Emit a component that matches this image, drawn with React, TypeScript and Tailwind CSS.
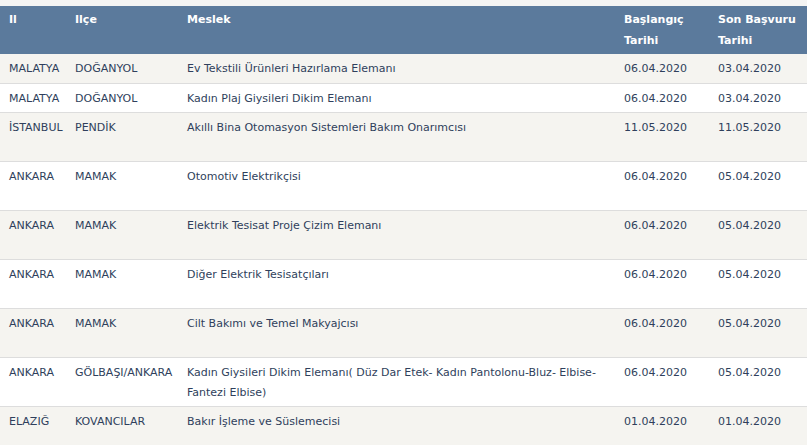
import React from "react";

type Row = { il: string; ilce: string; meslek: string; bas: string; son: string; tall?: boolean };

const rows: Row[] = [
  { il: "MALATYA", ilce: "DOĞANYOL", meslek: "Ev Tekstili Ürünleri Hazırlama Elemanı", bas: "06.04.2020", son: "03.04.2020" },
  { il: "MALATYA", ilce: "DOĞANYOL", meslek: "Kadın Plaj Giysileri Dikim Elemanı", bas: "06.04.2020", son: "03.04.2020" },
  { il: "İSTANBUL", ilce: "PENDİK", meslek: "Akıllı Bina Otomasyon Sistemleri Bakım Onarımcısı", bas: "11.05.2020", son: "11.05.2020", tall: true },
  { il: "ANKARA", ilce: "MAMAK", meslek: "Otomotiv Elektrikçisi", bas: "06.04.2020", son: "05.04.2020", tall: true },
  { il: "ANKARA", ilce: "MAMAK", meslek: "Elektrik Tesisat Proje Çizim Elemanı", bas: "06.04.2020", son: "05.04.2020", tall: true },
  { il: "ANKARA", ilce: "MAMAK", meslek: "Diğer Elektrik Tesisatçıları", bas: "06.04.2020", son: "05.04.2020", tall: true },
  { il: "ANKARA", ilce: "MAMAK", meslek: "Cilt Bakımı ve Temel Makyajcısı", bas: "06.04.2020", son: "05.04.2020", tall: true },
  { il: "ANKARA", ilce: "GÖLBAŞI/ANKARA", meslek: "Kadın Giysileri Dikim Elemanı( Düz Dar Etek- Kadın Pantolonu-Bluz- Elbise- Fantezi Elbise)", bas: "06.04.2020", son: "05.04.2020", tall: true },
  { il: "ELAZIĞ", ilce: "KOVANCILAR", meslek: "Bakır İşleme ve Süslemecisi", bas: "01.04.2020", son: "01.04.2020", tall: true },
];

export default function App() {
  return (
    <div
      className="w-[807px] h-[445px] overflow-hidden bg-[#f4f4f3] pt-[6px]"
      style={{ fontFamily: '"DejaVu Sans", Verdana, sans-serif' }}
    >
      <table className="w-[807px] table-fixed border-collapse text-[11px] text-[#2f3f5c]">
        <colgroup>
          <col className="w-[66px]" />
          <col className="w-[112px]" />
          <col className="w-[437px]" />
          <col className="w-[94px]" />
          <col className="w-[98px]" />
        </colgroup>
        <thead>
          <tr className="bg-[#5b7a9c] text-white h-[48px]">
            <th className="text-left align-top font-bold leading-[21px] pl-[9px] pt-[3px]">Il</th>
            <th className="text-left align-top font-bold leading-[21px] pl-[9px] pt-[3px]">Ilçe</th>
            <th className="text-left align-top font-bold leading-[21px] pl-[9px] pt-[3px]">Meslek</th>
            <th className="text-left align-top font-bold leading-[21px] pl-[9px] pt-[3px]">Başlangıç Tarihi</th>
            <th className="text-left align-top font-bold leading-[21px] pl-[9px] pt-[3px]">Son Başvuru Tarihi</th>
          </tr>
        </thead>
        <tbody>
          {rows.map((r, i) => (
            <tr
              key={i}
              className={`${i % 2 === 0 ? "bg-[#f5f4f0]" : "bg-white"} border-b border-[#dddddd] ${r.tall ? "h-[49px]" : "h-[29px]"}`}
            >
              <td className="align-top leading-[20px] pl-[9px] pt-[5px] whitespace-nowrap">{r.il}</td>
              <td className="align-top leading-[20px] pl-[9px] pt-[5px] whitespace-nowrap">{r.ilce}</td>
              <td className="align-top leading-[20px] pl-[9px] pr-[10px] pt-[5px]">{r.meslek}</td>
              <td className="align-top leading-[20px] pl-[9px] pt-[5px] whitespace-nowrap">{r.bas}</td>
              <td className="align-top leading-[20px] pl-[9px] pt-[5px] whitespace-nowrap">{r.son}</td>
            </tr>
          ))}
        </tbody>
      </table>
    </div>
  );
}
